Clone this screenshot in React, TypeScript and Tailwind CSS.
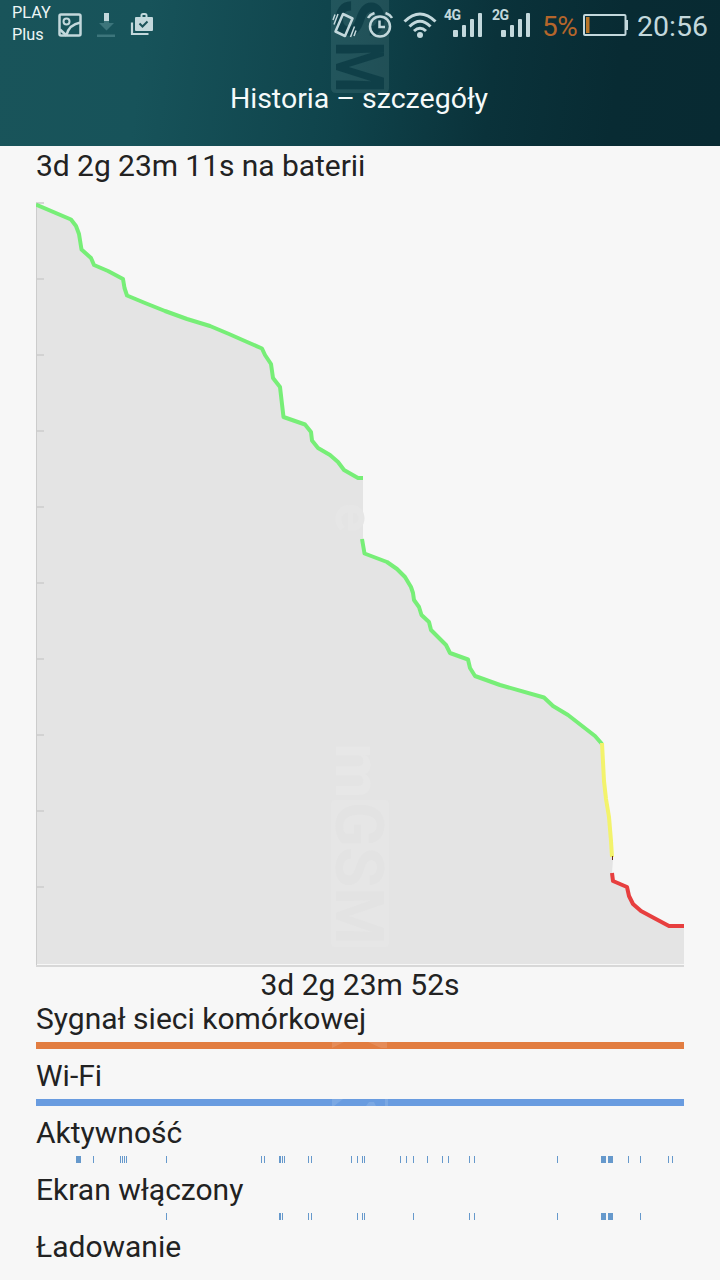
type Mark = [x: number, width: number];

const GREEN_BEFORE =
  "36,204.5 71,219.5 76,226 79,234 81.5,249.5 91,258 94,265 108,271 123,279 124.5,288 127,295.5 145,303 165,311 187,319 210,326 229,334 246,341.5 262,348.5 265,355 271,364 273,378 280,387 283.5,417 305,424.5 311,432 312,440.5 318,448 330,455 338,462 344,470 358,478 363,478";
const GREEN_AFTER =
  "362,539 364.5,553.5 387,562 397,569 405,577 411,587 413,593 414,600 419,607 421.5,615 429,622 431,630 446,645 450,653 468,659.5 470,668 475,676 500,685 544,697.5 553,706 568,715 595,736 602,744";
const YELLOW = "602,743 604,781 606,799 609,817 611,841 612,857";
const RED = "612,873 613,881 627,887 629,896 633,904 641,911 654,918 669,926 684,926";

const GRID_TICKS = [203, 279, 355, 431, 507, 583, 659, 735, 811, 887];

const ACTIVITY: Mark[] = [
  [76, 5], [93, 1], [120, 1], [122, 1], [124, 1], [126, 1], [166, 1], [261, 1], [264, 1],
  [279, 2], [282, 1], [284, 1], [308, 1], [311, 1], [351, 1], [357, 1], [362, 1], [364, 1],
  [400, 1], [406, 1], [413, 1], [427, 1], [442, 1], [448, 1], [469, 1], [474, 1], [557, 1],
  [601, 5], [608, 5], [628, 1], [640, 1], [668, 1], [672, 1],
];
const SCREEN_ON: Mark[] = [
  [166, 1], [279, 2], [282, 1], [308, 1], [311, 1], [357, 1], [362, 1], [364, 1], [413, 1],
  [469, 1], [474, 1], [557, 1], [601, 5], [608, 5], [640, 1],
];

const ROWS: { label: string; color: string; marks: Mark[]; sheen?: string }[] = [
  { label: "Sygnał sieci komórkowej", color: "#e27d41", marks: [[36, 648]], sheen: "M332 0h12l-12 6zM368 0h19v6h-6z" },
  { label: "Wi-Fi", color: "#699ce0", marks: [[36, 648]], sheen: "M332 0h11l-9 7h-2zM385 0h3v7h-3zM366 7l3-4h5l2 4z" },
  { label: "Aktywność", color: "#6699cc", marks: ACTIVITY },
  { label: "Ekran włączony", color: "#6699cc", marks: SCREEN_ON },
  { label: "Ładowanie", color: "#6699cc", marks: [] },
];

function Signal({ label }: { label: string }) {
  return (
    <div className="relative h-[30px] w-[39px]">
      <span className="absolute -top-px left-0 text-[14px] leading-[14px] font-bold tracking-[-0.5px]">{label}</span>
      <svg className="absolute top-[3px] left-[9px]" width="30" height="26" fill="currentColor">
        <rect x="0" y="18" width="5" height="7" rx="1" />
        <rect x="9" y="13" width="4" height="12" rx="1" />
        <rect x="17" y="7" width="4" height="18" rx="1" />
        <rect x="25" y="1" width="4" height="24" rx="1" />
      </svg>
    </div>
  );
}

function StatusBar() {
  return (
    <div className="flex h-[50px] items-start pl-3 text-[#c3d8dc]">
      <div className="w-[46px] pt-[2px] text-[16.3px] leading-[22px] text-[#edf6f6]">
        <div>PLAY</div>
        <div>Plus</div>
      </div>
      <svg className="mt-[11px]" width="24" height="26" fill="none" stroke="currentColor">
        <rect x="1.5" y="3.5" width="21" height="21" rx="1.5" strokeWidth="2.5" />
        <circle cx="8.5" cy="10.5" r="3" strokeWidth="2" />
        <path d="M8.5 24C10 18 14 13 22.5 11.5M2 18.5L8.5 24.5" strokeWidth="2.5" />
      </svg>
      <svg className="mt-3 ml-[14px]" width="20" height="26">
        <path d="M8 1h5v8H8z" fill="#c3d8dc" />
        <path d="M8 9h5v2h5l-7.5 7.5L3 11h5z" fill="#3c757b" />
        <path d="M1 22.5h18v2.5H1z" fill="#3c757b" />
      </svg>
      <svg className="mt-3 ml-[14px]" width="24" height="24">
        <path d="M2 10.5v11.5h16.5" fill="none" stroke="currentColor" strokeWidth="2.2" />
        <path
          d="M6 5h4.500V3.500Q10.500 1 13 1h2q2.500 0 2.500 2.500V5h4.500q1 0 1 1v12q0 1-1 1H6q-1 0-1-1V6q0-1 1-1zm6.500 0h3V3h-3z"
          fill="currentColor"
          fillRule="evenodd"
        />
        <path d="M9.500 11.500l3 3 5-5" fill="none" stroke="#1b535a" strokeWidth="2" />
      </svg>

      <svg className="mt-[10px] ml-[178px]" width="26" height="30" fill="none" stroke="currentColor">
        <path d="M11 4L20.500 8.500 13 26 3.500 21.500z" strokeWidth="2.500" strokeLinejoin="round" />
        <path d="M3 4.500L1 10M6 4L2 14.500M22.500 16.500L18.500 27M24 20.500L22 26" strokeWidth="1.500" />
      </svg>
      <svg className="mt-[10px] ml-[9px]" width="26" height="30" fill="none" stroke="currentColor">
        <circle cx="13" cy="16.500" r="10" strokeWidth="2.500" />
        <path d="M12.500 10.500v6.500h5.500" strokeWidth="2.500" />
        <path d="M1 8q2-3.500 6.500-5M25 8q-2-3.500-6.500-5" strokeWidth="2.500" />
      </svg>
      <svg className="mt-[10px] ml-[10px]" width="34" height="30" fill="none" stroke="currentColor">
        <path d="M1.500 11.500Q17-3.500 32.500 11.500" strokeWidth="3" />
        <path d="M6.500 16.500Q17 6 27.500 16.500" strokeWidth="3" />
        <path d="M11 21Q17 15.500 23 21" strokeWidth="3" />
        <circle cx="17" cy="25" r="3" fill="currentColor" stroke="none" />
      </svg>
      <div className="mt-[9px] ml-[7px] flex gap-[9px]">
        <Signal label="4G" />
        <Signal label="2G" />
      </div>
      <div className="mt-[10px] ml-[11px] w-[40px] text-[28px] leading-[34px] tracking-[-0.5px] text-[#b5662b]">5%</div>
      <svg className="mt-[13px] ml-px" width="46" height="24">
        <rect x="1" y="2" width="41.5" height="20" rx="1" fill="none" stroke="currentColor" strokeWidth="2" />
        <path d="M42.5 7h2.5v10h-2.5z" fill="currentColor" />
        <path d="M3 4h3.5v16H3z" fill="#b87529" />
      </svg>
      <div className="mt-[10px] ml-[8px] text-[28.5px] leading-[34px]">20:56</div>
    </div>
  );
}

function Watermark() {
  return (
    <svg className="pointer-events-none absolute top-0 left-[331px] overflow-visible" width="58" height="94">
      <path d="M0 0H58V88q0 5-5 5H5q-5 0-5-5z" fill="#9fc6c6" fillOpacity="0.13" />
      <g fontFamily="Roboto, sans-serif" fontWeight="700" fontSize="66" fill="#0f3f48">
        <text transform="translate(5 -1) rotate(90)" textLength="39" lengthAdjust="spacingAndGlyphs">S</text>
        <text transform="translate(5 41) rotate(90)" textLength="52" lengthAdjust="spacingAndGlyphs">M</text>
      </g>
    </svg>
  );
}

function BatteryChart() {
  return (
    <svg className="mt-[17px] block" width="648" height="768" viewBox="36 200 648 768" fill="none">
      <path d={`M${GREEN_BEFORE} V541 L${GREEN_AFTER} ${YELLOW} 613,860 ${RED} V964 H36 Z`} fill="#e4e4e4" />
      <rect x="331" y="800" width="58" height="147" rx="4" fill="#e6e6e6" />
      <g fontFamily="Roboto, sans-serif" fontWeight="700">
        <text transform="translate(336 743) rotate(90)" fontSize="64" fill="#e7e7e7">m</text>
        <text transform="translate(336 802) rotate(90)" fontSize="66" textLength="143" lengthAdjust="spacingAndGlyphs" fill="#e3e3e3">GSM</text>
        <text transform="translate(336 503) rotate(90)" fontSize="54" fill="#e6e6e6">e</text>
      </g>
      <path d="M36.5 203V967" stroke="#cccccc" />
      <path d={GRID_TICKS.map((y) => `M36 ${y}h8`).join("")} stroke="#cccccc" strokeWidth="1.5" />
      <path d="M37 964.5H684" stroke="#f7f7f7" />
      <path d="M36 966H684" stroke="#d8d8d8" strokeWidth="2" />
      <g strokeWidth="4" strokeLinejoin="round">
        <polyline points={GREEN_BEFORE} stroke="#77ee77" />
        <polyline points={GREEN_AFTER} stroke="#77ee77" />
        <polyline points={YELLOW} stroke="#f3f36c" />
        <polyline points={RED} stroke="#e73f3f" />
      </g>
      <path d="M612.5 856v4" stroke="#6b3020" />
    </svg>
  );
}

function HistoryRow({ label, color, marks, sheen }: { label: string; color: string; marks: Mark[]; sheen?: string }) {
  return (
    <div>
      <div className="leading-[34px]">{label}</div>
      <svg className="mt-[6px] block" width="648" height="7" viewBox="36 0 648 7" fill={color}>
        {marks.map(([x, width]) => (
          <rect key={x} x={x} y="0" width={width} height="7" />
        ))}
        {sheen && <path d={sheen} fill="#ffffff" fillOpacity="0.12" />}
      </svg>
    </div>
  );
}

export default function App() {
  return (
    <main className="h-[1280px] w-[720px] overflow-hidden bg-[#f7f7f7] font-['Roboto',sans-serif] text-[#222222]">
      <header className="relative h-[146px] bg-[linear-gradient(97deg,#19545a_0%,#17535a_20%,#0f434b_48%,#0a323a_68%,#082b33_85%,#082a32_100%)]">
        <Watermark />
        <div className="relative">
          <StatusBar />
          <h1 className="mt-8 pr-[2px] text-center text-[28.5px] leading-[34px] text-[#f5fafa]">Historia – szczegóły</h1>
        </div>
      </header>

      <section className="px-9 pt-[3px] text-[30px]">
        <div className="leading-[34px] tracking-[-0.05px]">3d 2g 23m 11s na baterii</div>
        <BatteryChart />
        <div className="text-center leading-[34px]">3d 2g 23m 52s</div>
        <div className="flex flex-col gap-[10px]">
          {ROWS.map((row) => (
            <HistoryRow key={row.label} {...row} />
          ))}
        </div>
      </section>
    </main>
  );
}
